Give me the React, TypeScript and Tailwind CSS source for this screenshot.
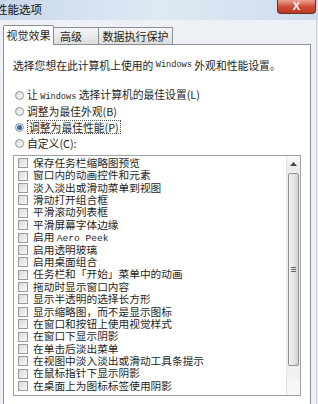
import React from 'react';

const items = [
  '保存任务栏缩略图预览',
  '窗口内的动画控件和元素',
  '淡入淡出或滑动菜单到视图',
  '滑动打开组合框',
  '平滑滚动列表框',
  '平滑屏幕字体边缘',
  'AERO',
  '启用透明玻璃',
  '启用桌面组合',
  '任务栏和「开始」菜单中的动画',
  '拖动时显示窗口内容',
  '显示半透明的选择长方形',
  '显示缩略图，而不是显示图标',
  '在窗口和按钮上使用视觉样式',
  '在窗口下显示阴影',
  '在单击后淡出菜单',
  '在视图中淡入淡出或滑动工具条提示',
  '在鼠标指针下显示阴影',
  '在桌面上为图标标签使用阴影',
];

const mono = 'font-["Liberation_Mono",monospace] text-[8.6px]';

function Radio({ checked }: { checked?: boolean }) {
  return (
    <span className="w-[9px] h-[9px] rounded-full border border-[#8f9499] bg-gradient-to-br from-[#d9dcdf] to-[#fbfbfb] flex items-center justify-center shrink-0">
      {checked && <span className="w-[5px] h-[5px] rounded-full bg-gradient-to-br from-[#4f8fd8] to-[#1b4f93]" />}
    </span>
  );
}

function Checkbox() {
  return (
    <span className="w-[10px] h-[10px] border border-[#9a9a9a] bg-gradient-to-br from-[#d8d8d8] to-[#fafafa] shrink-0" />
  );
}

export default function App() {
  return (
    <div className='w-[318px] h-[404px] overflow-hidden relative bg-[#edf1f5] text-[#1e1e1e] font-["Noto_Sans_CJK_SC",sans-serif]'>
      {/* Title bar */}
      <div className="h-[20px] bg-gradient-to-r from-[#c8d9eb] via-[#dfe9f4] to-[#cddcec] flex items-center">
        <span className="ml-[-4px] text-[11.5px] leading-none text-[#111]">性能选项</span>
      </div>
      <div className="absolute top-0 right-[2px] w-[39px] h-[14px] rounded-b-[4px] border border-t-0 border-[#6e2b22] bg-gradient-to-b from-[#e9a294] via-[#cf4d36] to-[#b83a24] flex items-center justify-center">
        <span className='text-white text-[11px] font-bold leading-none font-["Liberation_Sans",sans-serif]'>X</span>
      </div>

      {/* Tabs */}
      <div className="flex items-end pl-[3px] h-[23px] mt-[1px]">
        <div className="w-[51px] h-[20px] bg-white border border-b-0 border-[#8c8f94] rounded-t-[2px] -mb-px relative z-10 flex items-center justify-center text-[11px]">
          视觉效果
        </div>
        <div className="w-[45px] h-[17px] bg-gradient-to-b from-[#f6f6f6] to-[#dcdcdc] border border-b-0 border-l-0 border-[#8c8f94] flex items-center pl-[6px] text-[11px]">
          高级
        </div>
        <div className="w-[74px] h-[17px] bg-gradient-to-b from-[#f6f6f6] to-[#dcdcdc] border border-b-0 border-l-0 border-[#8c8f94] flex items-center justify-center text-[11px]">
          数据执行保护
        </div>
      </div>

      {/* Panel */}
      <div className="ml-[3px] mr-[7px] h-[370px] bg-white border border-[#8c8f94] pl-[9px] pr-[9px] pt-[13px]">
        <div className="h-[14px] flex items-center text-[10.8px] leading-none whitespace-nowrap">
          选择您想在此计算机上使用的&nbsp;<span className={mono}>Windows</span>&nbsp;外观和性能设置。
        </div>

        <div className="mt-[15px] flex flex-col text-[10.8px] leading-none pl-[2px]">
          <div className="h-[16px] flex items-center gap-[3px]">
            <Radio />
            <span className="whitespace-nowrap">
              让 <span className={mono}>Windows</span> 选择计算机的最佳设置(L)
            </span>
          </div>
          <div className="h-[16px] flex items-center gap-[3px]">
            <Radio />
            <span>调整为最佳外观(B)</span>
          </div>
          <div className="h-[16px] flex items-center gap-[3px]">
            <Radio checked />
            <span className="border border-dotted border-[#555] px-px py-px">调整为最佳性能(P)</span>
          </div>
          <div className="h-[16px] flex items-center gap-[3px]">
            <Radio />
            <span>自定义(C):</span>
          </div>
        </div>

        {/* List box */}
        <div className="mt-[4px] h-[241px] border border-[#9ea2a8] flex overflow-hidden">
          <div className="flex-1 pt-[1px] pl-[4px] flex flex-col">
            {items.map((t, i) => (
              <div key={i} className="h-[12.4px] flex items-center gap-[5px] text-[10.7px] leading-none whitespace-nowrap">
                <Checkbox />
                {t === 'AERO' ? (
                  <span>
                    启用 <span className='font-["Liberation_Mono",monospace] text-[9.6px]'>Aero Peek</span>
                  </span>
                ) : (
                  <span>{t}</span>
                )}
              </div>
            ))}
          </div>
          {/* Scrollbar */}
          <div className="w-[14px] bg-[#f1f1f1] border-l border-[#e2e2e2] flex flex-col">
            <div className="h-[15px] bg-gradient-to-b from-[#fbfbfb] to-[#e9e9e9] flex items-center justify-center">
              <svg width="7" height="4" viewBox="0 0 7 4">
                <path d="M0 4 L3.5 0 L7 4 Z" fill="#444" />
              </svg>
            </div>
            <div className="mt-[2px] mx-[1px] h-[193px] rounded-[2px] border border-[#8e8f8f] bg-gradient-to-r from-[#f2f2f2] via-[#e3e3e3] to-[#d2d2d2] flex items-center justify-center">
              <div className="flex flex-col gap-[1px]">
                <span className="w-[5px] h-px bg-[#666]" />
                <span className="w-[5px] h-px bg-[#666]" />
                <span className="w-[5px] h-px bg-[#666]" />
              </div>
            </div>
            <div className="flex-1" />
            <div className="h-[15px] bg-[#f7f7f7]" />
          </div>
        </div>
      </div>
      <div className="absolute top-[20px] right-[1px] w-px h-[384px] bg-[#c9ced4]" />
    </div>
  );
}
